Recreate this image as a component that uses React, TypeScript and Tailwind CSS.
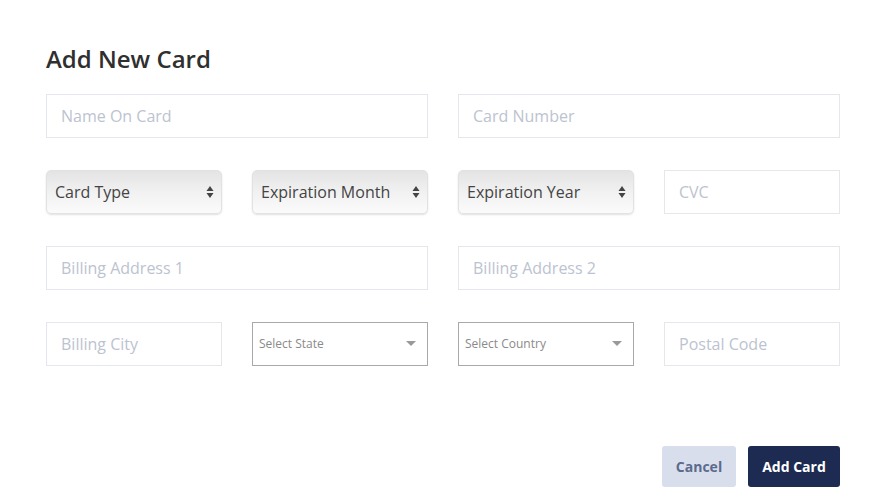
import React from 'react';

const font = { fontFamily: '"Open Sans", "Noto Sans", sans-serif' };

const TextField = ({ placeholder }: { placeholder: string }) => (
    <input
        type="text"
        placeholder={placeholder}
        className="h-[44px] w-full border border-[#e4e7ec] bg-white px-[14px] text-[16px] text-[#333] outline-none placeholder:text-[#bcc3d0]"
    />
);

const GradientSelect = ({ label }: { label: string }) => (
    <div className="flex h-[44px] w-full items-center justify-between rounded-[5px] border border-[#e2e2e2] bg-gradient-to-b from-[#e4e4e4] via-[#f1f1f1] to-[#fbfbfb] pl-[8px] pr-[7px] shadow-[0_1px_2px_rgba(0,0,0,0.12)]">
        <span className="text-[16px] text-[#444]">{label}</span>
        <svg width="8" height="14" viewBox="0 0 8 14" className="text-[#444]">
            <path d="M4 1 L7.5 6 L0.5 6 Z" fill="currentColor" />
            <path d="M4 13 L7.5 8 L0.5 8 Z" fill="currentColor" />
        </svg>
    </div>
);

const PlainSelect = ({ label }: { label: string }) => (
    <div className="flex h-[44px] w-full items-center justify-between border border-[#a9a9a9] bg-white pl-[6px] pr-[11px]">
        <span className="text-[12px] text-[#8a8a8a]">{label}</span>
        <svg width="10" height="6" viewBox="0 0 10 6">
            <path d="M0 0 L10 0 L5 5 Z" fill="#999" />
        </svg>
    </div>
);

export default function App() {
    return (
        <div className="min-h-[496px] w-[875px] bg-white pl-[46px] pr-[35px] pt-[43px]" style={font}>
            <h1 className="text-[24px] font-semibold leading-[32px] text-[#2f2f2f]">Add New Card</h1>

            <div className="mt-[19px] flex flex-col gap-[32px]">
                <div className="grid grid-cols-2 gap-[30px]">
                    <TextField placeholder="Name On Card" />
                    <TextField placeholder="Card Number" />
                </div>

                <div className="grid grid-cols-4 gap-[30px]">
                    <GradientSelect label="Card Type" />
                    <GradientSelect label="Expiration Month" />
                    <GradientSelect label="Expiration Year" />
                    <TextField placeholder="CVC" />
                </div>

                <div className="grid grid-cols-2 gap-[30px]">
                    <TextField placeholder="Billing Address 1" />
                    <TextField placeholder="Billing Address 2" />
                </div>

                <div className="grid grid-cols-4 gap-[30px]">
                    <TextField placeholder="Billing City" />
                    <PlainSelect label="Select State" />
                    <PlainSelect label="Select Country" />
                    <TextField placeholder="Postal Code" />
                </div>
            </div>

            <div className="mt-[80px] flex justify-end gap-[12px]">
                <button className="h-[41px] w-[74px] rounded-[3px] bg-[#d9deec] text-[14px] font-bold text-[#5b6b8c]">
                    Cancel
                </button>
                <button className="h-[41px] w-[92px] rounded-[3px] bg-[#1d2b52] text-[14px] font-bold text-white">
                    Add Card
                </button>
            </div>
        </div>
    );
}
